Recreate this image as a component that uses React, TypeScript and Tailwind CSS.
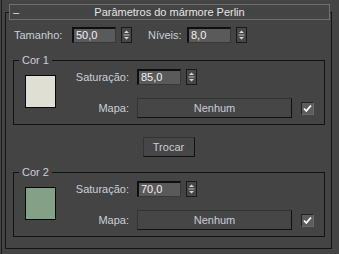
import React from "react";

function Spinner({ className = "" }: { className?: string }) {
  return (
    <div className={"w-[11px] h-[16px] border border-[#1a1a1a] bg-[#474747] flex items-center justify-center " + className}>
      <svg width="9" height="14" viewBox="0 0 9 14">
        <path d="M4.5 2.5 L7 5 L2 5 Z" fill="#d6d6d6" />
        <line x1="1.5" y1="7" x2="7.5" y2="7" stroke="#bdbdbd" strokeWidth="1" />
        <path d="M2 9 L7 9 L4.5 11.5 Z" fill="#d6d6d6" />
      </svg>
    </div>
  );
}

function NumInput({ value }: { value: string }) {
  return (
    <div className="w-[44px] h-[16px] bg-[#5a5a5a] border-t-2 border-l-2 border-r border-b border-t-[#0f0f0f] border-l-[#0f0f0f] border-r-[#383838] border-b-[#383838] pl-[2px] text-[11px] leading-[13px] text-[#f2f2f2]">
      {value}
    </div>
  );
}

function Checkbox() {
  return (
    <div className="w-[13px] h-[13px] ml-[9px] bg-[#5c5c5c] border border-t-[#222] border-l-[#222] border-r-[#6a6a6a] border-b-[#6a6a6a] flex items-center justify-center">
      <svg width="11" height="11" viewBox="0 0 11 11">
        <path d="M2 5.5 L4.3 8 L9 2.5" fill="none" stroke="#ffffff" strokeWidth="1.8" />
      </svg>
    </div>
  );
}

function ColorGroup({ title, swatch, sat, top }: { title: string; swatch: string; sat: string; top: string }) {
  return (
    <div className={"relative ml-[7px] w-[312px] h-[65px] border border-[#121212] flex " + top}>
      <div className="absolute left-[5px] top-[-8px] px-[3px] bg-[#444444] text-[11px] leading-[14px] text-[#cbd0d8]">
        {title}
      </div>
      <div className={"ml-[11px] mt-[14px] w-[31px] h-[33px] border border-[#080808] " + swatch} />
      <div className="flex flex-col mt-[8px]">
        <div className="flex items-center h-[16px]">
          <span className="w-[73px] text-right text-[11px] text-[#cbd0d8]">Saturação:</span>
          <div className="ml-[8px]">
            <NumInput value={sat} />
          </div>
          <Spinner className="ml-[5px]" />
        </div>
        <div className="flex items-center mt-[13px] h-[20px]">
          <span className="w-[73px] text-right text-[11px] text-[#cbd0d8]">Mapa:</span>
          <div className="ml-[8px] w-[155px] h-[20px] border border-t-[#333] border-l-[#333] border-r-[#111] border-b-[#111] bg-[#464646] flex items-center justify-center text-[11px] text-[#c8cdd6]">
            Nenhum
          </div>
          <Checkbox />
        </div>
      </div>
    </div>
  );
}

export default function App() {
  return (
    <div className="w-[339px] h-[254px] bg-[#444444] flex font-['Liberation_Sans',Arial,sans-serif] overflow-hidden">
      <div className="w-[1px] ml-[1px] bg-[#1c1c1c]" />
      <div className="ml-[3px] mt-[12px] w-[327px] h-[237px] border border-[#161616] flex flex-col">
        <div className="-mt-[9px] ml-[3px] w-[321px] h-[16px] border border-[#717171] bg-[#444444] flex items-center">
          <span className="w-[14px] pl-[3px] text-[11px] leading-[14px] text-[#e6e6e6]">–</span>
          <span className="flex-1 text-center text-[11px] leading-[14px] text-[#e6e6e6]">Parâmetros do mármore Perlin</span>
          <span className="w-[14px]" />
        </div>
        <div className="flex items-center mt-[7px] h-[16px]">
          <span className="ml-[8px] w-[58px] text-[11px] text-[#cbd0d8]">Tamanho:</span>
          <NumInput value="50,0" />
          <Spinner className="ml-[5px]" />
          <span className="ml-[16px] w-[39px] text-[11px] text-[#cbd0d8]">Níveis:</span>
          <NumInput value="8,0" />
          <Spinner className="ml-[5px]" />
        </div>
        <ColorGroup title="Cor 1" swatch="bg-[#dfe0d3]" sat="85,0" top="mt-[17px]" />
        <div className="mt-[12px] mx-auto w-[52px] h-[20px] border border-t-[#333] border-l-[#333] border-r-[#111] border-b-[#111] bg-[#464646] flex items-center justify-center text-[11px] text-[#c8cdd6]">
          Trocar
        </div>
        <ColorGroup title="Cor 2" swatch="bg-[#84a086]" sat="70,0" top="mt-[15px]" />
      </div>
    </div>
  );
}
